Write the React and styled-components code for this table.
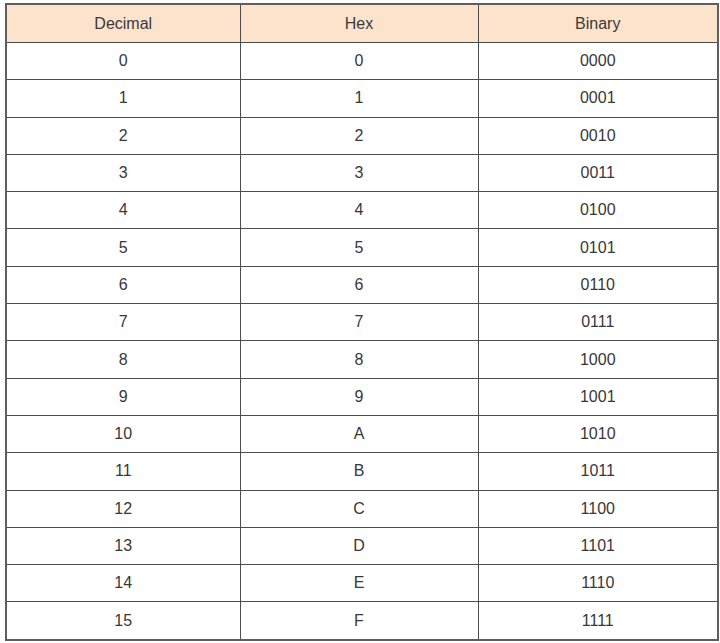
import React from "react";
import styled, { createGlobalStyle } from "styled-components";

const GlobalStyle = createGlobalStyle`
  html, body {
    margin: 0;
    padding: 0;
    background: #fff;
  }
`;

const Page = styled.div`
  padding: 3px 0 0 5px;
`;

const Table = styled.table`
  width: 712px;
  border-collapse: collapse;
  table-layout: fixed;
  border: 2px solid #5e5e5e;
  font-family: "Liberation Sans", Arial, sans-serif;
  font-size: 16px;
  color: #383838;
`;

const Col = styled.col`
  width: ${(p) => p.$w}px;
`;

const HeadCell = styled.th`
  height: 37px;
  padding: 0;
  font-weight: normal;
  background: #fde3cb;
  border: 1px solid #4d4d4d;
  text-align: center;
  color: #3a3a3a;
`;

const Cell = styled.td`
  height: 36.3px;
  padding: 0;
  border: 1px solid #4d4d4d;
  text-align: center;
`;

const rows = Array.from({ length: 16 }, (_, i) => [
  String(i),
  i.toString(16).toUpperCase(),
  i.toString(2).padStart(4, "0"),
]);

export default function App() {
  return (
    <>
      <GlobalStyle />
      <Page>
        <Table>
          <colgroup>
            <Col $w={234} />
            <Col $w={238} />
            <Col $w={240} />
          </colgroup>
          <thead>
            <tr>
              <HeadCell>Decimal</HeadCell>
              <HeadCell>Hex</HeadCell>
              <HeadCell>Binary</HeadCell>
            </tr>
          </thead>
          <tbody>
            {rows.map((r) => (
              <tr key={r[0]}>
                {r.map((v, j) => (
                  <Cell key={j}>{v}</Cell>
                ))}
              </tr>
            ))}
          </tbody>
        </Table>
      </Page>
    </>
  );
}
